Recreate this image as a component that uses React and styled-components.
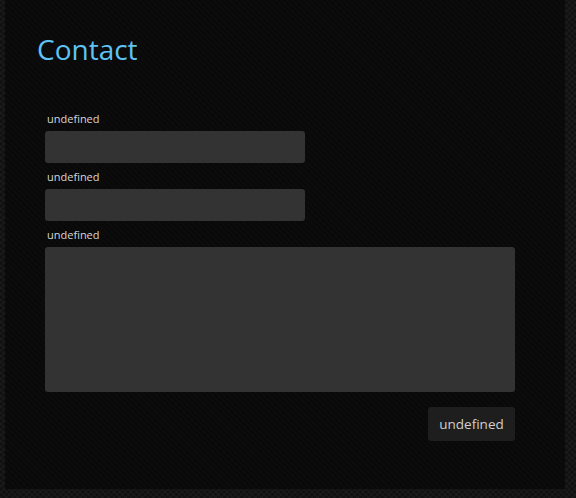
import styled, { createGlobalStyle } from "styled-components";

const GlobalStyle = createGlobalStyle`
 html, body {
  margin: 0;
  padding: 0;
  height: 100%;
 }
 body {
  font-family: "Open Sans", "Liberation Sans", sans-serif;
  background-color: #151515;
  background-image:
   repeating-linear-gradient(45deg, rgba(255,255,255,0.025) 0 2px, transparent 2px 4px),
   repeating-linear-gradient(-45deg, rgba(0,0,0,0.25) 0 2px, transparent 2px 4px);
 }
`;

const Page = styled.div`
 padding: 0 11px 9px 5px;
`;

const Panel = styled.section`
 background-color: #090909;
 background-image: repeating-linear-gradient(
  45deg,
  rgba(255, 255, 255, 0.012) 0 2px,
  transparent 2px 4px
 );
 padding: 31px 50px 47px 32px;
 min-height: 411px;
`;

const Title = styled.h1`
 margin: 0 0 46px;
 font-weight: 400;
 font-size: 28px;
 line-height: 36px;
 color: #5ec3f2;
`;

const Form = styled.form`
 display: flex;
 flex-direction: column;
 padding-left: 8px;
`;

const Label = styled.label`
 display: block;
 font-size: 11px;
 line-height: 12px;
 color: #d6d6d6;
 padding-left: 2px;
 margin-bottom: 6px;
`;

const Field = styled.div`
 margin-bottom: 8px;
`;

const Input = styled.input`
 display: block;
 box-sizing: border-box;
 width: 260px;
 height: 32px;
 border: none;
 border-radius: 3px;
 background: #333333;
 color: #ddd;
 outline: none;
`;

const TextArea = styled.textarea`
 display: block;
 box-sizing: border-box;
 width: 470px;
 height: 145px;
 border: none;
 border-radius: 3px;
 background: #333333;
 resize: none;
 outline: none;
`;

const Actions = styled.div`
 display: flex;
 justify-content: flex-end;
 width: 470px;
 margin-top: 7px;
`;

const Button = styled.button`
 width: 87px;
 height: 34px;
 border: none;
 border-radius: 3px;
 background: #1e1e1e;
 color: #d0d0d0;
 font-family: "Open Sans", "Liberation Sans", sans-serif;
 font-size: 13.5px;
 cursor: pointer;
`;

export default function App() {
 return (
  <>
   <GlobalStyle />
   <Page>
    <Panel>
     <Title>Contact</Title>
     <Form onSubmit={(e) => e.preventDefault()}>
      <Field>
       <Label>undefined</Label>
       <Input type='text' />
      </Field>
      <Field>
       <Label>undefined</Label>
       <Input type='email' />
      </Field>
      <Field>
       <Label>undefined</Label>
       <TextArea />
      </Field>
      <Actions>
       <Button type='submit'>undefined</Button>
      </Actions>
     </Form>
    </Panel>
   </Page>
  </>
 );
}
